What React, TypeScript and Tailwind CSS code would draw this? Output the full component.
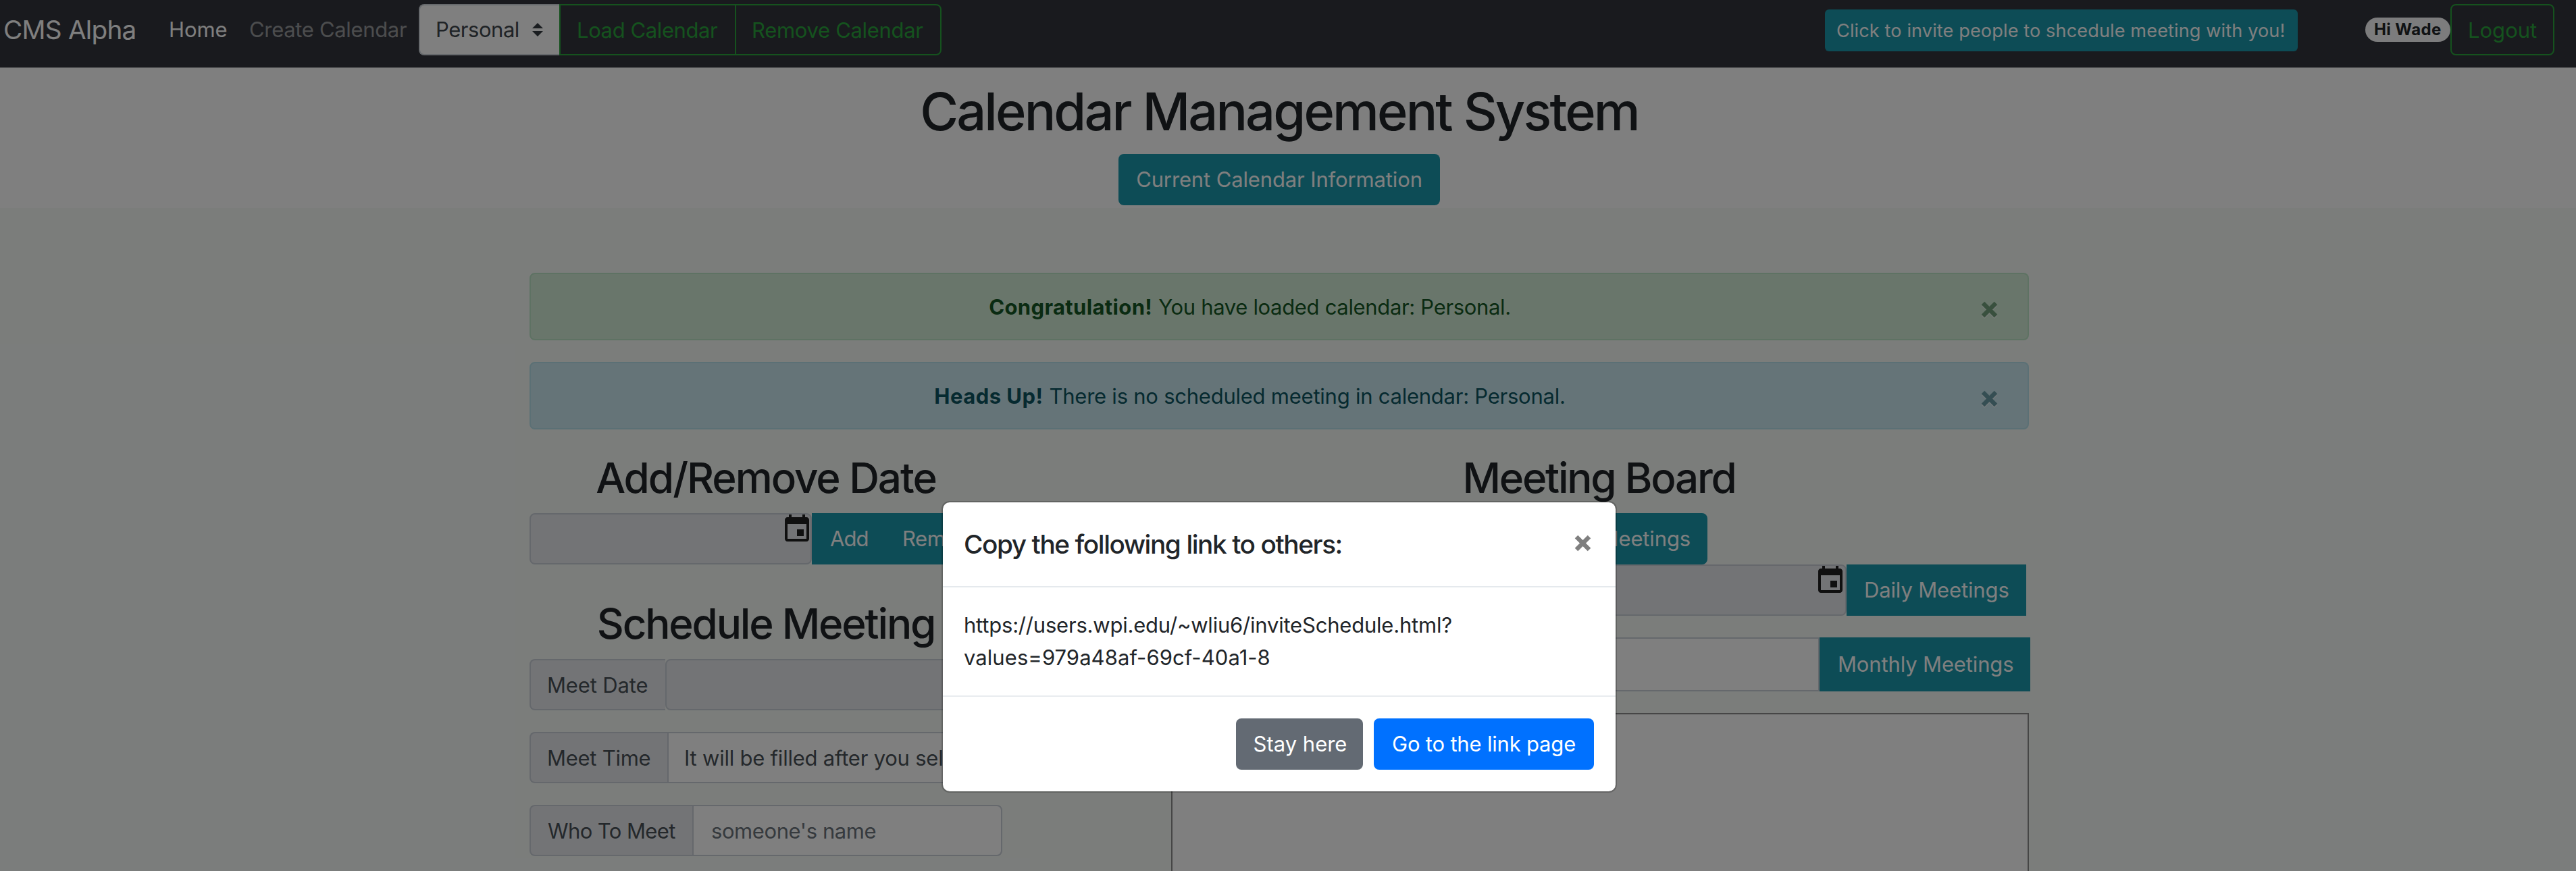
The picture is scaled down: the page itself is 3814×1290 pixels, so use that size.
import type { ReactNode } from 'react'

function CloseIcon({ className = '' }: { className?: string }) {
  return (
    <svg viewBox="0 0 25 25" className={`block size-[25px] overflow-visible ${className}`} fill="none" stroke="currentColor" strokeWidth="6.4">
      <path d="M3 3L22 22M22 3L3 22" />
    </svg>
  )
}

function EventIcon() {
  return (
    <svg viewBox="0 0 24 24" className="block size-12" fill="#212121">
      <path d="M17 12h-5v5h5v-5zM16 1v2H8V1H6v2H5c-1.11 0-1.99.9-1.99 2L3 19c0 1.1.89 2 2 2h14c1.1 0 2-.9 2-2V5c0-1.1-.9-2-2-2h-1V1h-2zm3 18H5V8h14v11z" />
    </svg>
  )
}

function Navbar() {
  return (
    <nav className="flex h-[100px] items-start bg-[#32353c] pt-[6px] text-[31px] leading-[76px] text-white">
      <span className="w-[244px] pl-[5px] text-[38.75px] tracking-[-0.79px]">CMS Alpha</span>
      <span className="w-[120px] pl-[6px] tracking-[-0.1px]">Home</span>
      <span className="w-[256px] pl-[5px] tracking-[-0.33px] text-white/50">Create Calendar</span>
      <div className="flex h-[76px] w-[208px] items-center rounded-l-lg border-2 border-r-0 border-[#ced4da] bg-white pl-[23px] text-[#495057]">
        <span className="w-[143px] tracking-[-0.46px] text-[#3f464d]">Personal</span>
        <svg viewBox="0 0 4 5" className="h-5 w-4" fill="#343a40">
          <path d="M2 0L0 2h4zm0 5L0 3h4z" />
        </svg>
      </div>
      <button className="h-[76px] w-[262px] border-2 border-[#2aa43c] pl-[24px] text-left leading-[73px] tracking-[-0.4px] text-[#2aa43c]">Load Calendar</button>
      <button className="h-[76px] w-[304px] rounded-r-lg border-2 border-l-0 border-[#2aa43c] pl-[23px] text-left leading-[73px] tracking-[-0.31px] text-[#2aa43c]">Remove Calendar</button>
      <button className="mt-[8px] ml-[1308px] h-[62px] w-[700px] rounded-[6px] bg-[#1a98ac] pt-px pl-[17px] text-left text-[27.1px] leading-[62px] tracking-[0.12px]">
        Click to invite people to shcedule meeting with you!
      </button>
      <span className="mt-[20px] ml-[100px] h-[36px] w-[126px] rounded-full bg-[#f8f9fa] pl-[13px] text-[24px] leading-[35px] font-bold tracking-[0.38px] text-[#212529]">Hi Wade</span>
      <button className="h-[76px] w-[154px] rounded-lg border-2 border-[#2aa43c] pl-[24px] text-left leading-[73px] text-[#2aa43c]">Logout</button>
    </nav>
  )
}

function Header() {
  return (
    <header className="flex h-[208px] w-[3788px] flex-col items-center bg-white pt-[17px]">
      <h1 className="mb-[15px] h-[96px] text-[77.5px] leading-[96px] font-[550] tracking-[-2.88px]">Calendar Management System</h1>
      <button className="h-[76px] w-[476px] rounded-lg bg-[#1a98ac] pt-px text-[31px] tracking-[-0.13px] text-white">Current Calendar Information</button>
    </header>
  )
}

function Alert({ className, children }: { className: string; children: ReactNode }) {
  return (
    <div className={`mb-8 flex h-[100px] items-center rounded-lg border-2 pl-[40px] text-[31px] ${className}`}>
      <div className="flex flex-1 justify-center gap-[9px] pt-[2px]">{children}</div>
      <div className="flex w-[127px] justify-start pl-[58px] pt-[8px]">
        <CloseIcon className="opacity-50 drop-shadow-[0_2px_0_#fff]" />
      </div>
    </div>
  )
}

function Prepend({ className, children }: { className: string; children: string }) {
  return <label className={`h-[76px] rounded-l-lg border-2 border-[#cad0d8] bg-[#e6e8ec] leading-[73px] text-[#495057] ${className}`}>{children}</label>
}

function LeftColumn() {
  return (
    <section className="w-[700px] shrink-0">
      <h2 className="h-[92px] pt-[2px] text-center text-[62px] leading-[76px] font-[550] tracking-[-2.05px]">Add/Remove Date</h2>
      <div className="flex h-[76px]">
        <div className="flex w-[418px] justify-end rounded-lg border-2 border-[#cad0d8] bg-[#e6e8ec]">
          <div className="-mt-[2px] -mr-[4px]"><EventIcon /></div>
        </div>
        <button className="w-[110px] bg-[#1a98ac] pt-px pl-[27px] text-left tracking-[-0.9px] text-white">Add</button>
        <button className="w-[172px] bg-[#1a98ac] pt-px pl-[24px] text-left tracking-[-0.4px] text-white">Remove</button>
      </div>
      <h2 className="h-[140px] pt-[50px] text-center text-[62px] leading-[76px] font-[550] tracking-[-2.2px]">Schedule Meeting</h2>
      <div className="flex flex-col gap-8">
        <div className="flex">
          <Prepend className="w-[201px] border-r-0 rounded-r-none pl-[24px] tracking-[-0.14px]">Meet Date</Prepend>
          <div className="h-[76px] w-[499px] rounded-lg border-2 border-[#cad0d8] bg-[#e6e8ec]" />
        </div>
        <div className="flex">
          <Prepend className="w-[204px] border-r-0 pl-[24px] tracking-[-0.27px]">Meet Time</Prepend>
          <div className="h-[76px] w-[496px] overflow-hidden rounded-r-lg border-2 border-[#cad0d8] bg-white pl-[23px] leading-[73px] tracking-[-0.22px] whitespace-nowrap text-[#495057]">
            It will be filled after you select
          </div>
        </div>
        <div className="flex">
          <Prepend className="w-[241px] border-r-0 pl-[25px] tracking-[-0.6px]">Who To Meet</Prepend>
          <div className="h-[76px] w-[459px] rounded-r-lg border-2 border-[#cad0d8] bg-white pl-[26px] leading-[73px] tracking-[-0.42px] text-[#6c757d]">someone's name</div>
        </div>
      </div>
    </section>
  )
}

function RightColumn() {
  return (
    <section className="w-[1272px] shrink-0">
      <h2 className="h-[92px] w-[1267px] pt-[2px] text-center text-[62px] leading-[76px] font-[550] tracking-[-2.25px]">Meeting Board</h2>
      <button className="ml-[477px] block h-[76px] w-[317px] rounded-lg bg-[#1a98ac] pt-px pr-[25px] text-right tracking-[-0.14px] text-white">Show All Meetings</button>
      <div className="mb-8 flex h-[76px]">
        <div className="flex w-[1000px] justify-end rounded-lg border-2 border-[#cad0d8] bg-[#e6e8ec]">
          <div className="-mt-[2px] -mr-[2px]"><EventIcon /></div>
        </div>
        <button className="w-[266px] bg-[#1a98ac] pt-px pl-[26px] text-left tracking-[-0.14px] text-white">Daily Meetings</button>
      </div>
      <div className="mb-8 flex h-20">
        <div className="w-[960px] border-2 border-[#cad0d8] bg-white" />
        <button className="w-[312px] bg-[#1a98ac] pt-px pl-[27px] text-left tracking-[-0.14px] text-white">Monthly Meetings</button>
      </div>
      <div className="h-[400px] w-[1270px] border-2 border-[#8c8c8c] bg-white" />
    </section>
  )
}

function LinkDialog() {
  return (
    <div className="absolute inset-0 bg-black/50">
      <div className="flex w-[3788px] justify-center pt-[742px]">
        <div className="w-[1000px] rounded-xl border-2 border-black/20 bg-white bg-clip-padding text-[#212529]">
          <div className="flex h-[126px] items-start justify-between border-b-2 border-[#e5e9ed] pr-[36px] pl-[31px]">
            <h5 className="pt-[32px] text-[38.75px] leading-[60px] font-medium tracking-[-1.41px]">Copy the following link to others:</h5>
            <CloseIcon className="mt-[48px] text-black opacity-50" />
          </div>
          <p className="h-[160px] pt-[32px] pl-[31px] text-[31px] leading-[48px]">
            <span className="tracking-[-0.21px]">https://users.wpi.edu/~wliu6/inviteSchedule.html?</span>
            <br />
            <span className="tracking-[0.06px]">values=979a48af-69cf-40a1-8</span>
          </p>
          <div className="flex h-[142px] justify-end gap-4 border-t-2 border-[#e9ecef] pt-[32px] pr-[32px] text-[31px] text-white">
            <button className="h-[76px] w-[188px] rounded-lg bg-[#636a73] pt-px pl-[2px]">Stay here</button>
            <button className="h-[76px] w-[326px] rounded-lg bg-[#0071ff] pt-px tracking-[-0.19px]">Go to the link page</button>
          </div>
        </div>
      </div>
    </div>
  )
}

export default function App() {
  return (
    <div className="relative h-[1290px] w-[3814px] overflow-hidden bg-white font-['Inter','Liberation_Sans',sans-serif] text-[#212529]">
      <Navbar />
      <Header />
      <main className="h-[982px] overflow-hidden bg-[#f6faf7] pt-[96px] pl-[784px] text-[31px]">
        <div className="w-[2220px]">
          <Alert className="border-[#bce4c6] bg-[#d2ecd6] text-[#155724]">
            <strong className="tracking-[0.36px]">Congratulation!</strong>
            <span className="tracking-[-0.33px]">You have loaded calendar: Personal.</span>
          </Alert>
          <Alert className="border-[#b6e1ea] bg-[#cbe8f0] text-[#0c5460]">
            <strong className="tracking-[0.47px]">Heads Up!</strong>
            <span className="tracking-[-0.24px]">There is no scheduled meeting in calendar: Personal.</span>
          </Alert>
          <div className="flex gap-[250px]">
            <LeftColumn />
            <RightColumn />
          </div>
        </div>
      </main>
      <LinkDialog />
    </div>
  )
}
